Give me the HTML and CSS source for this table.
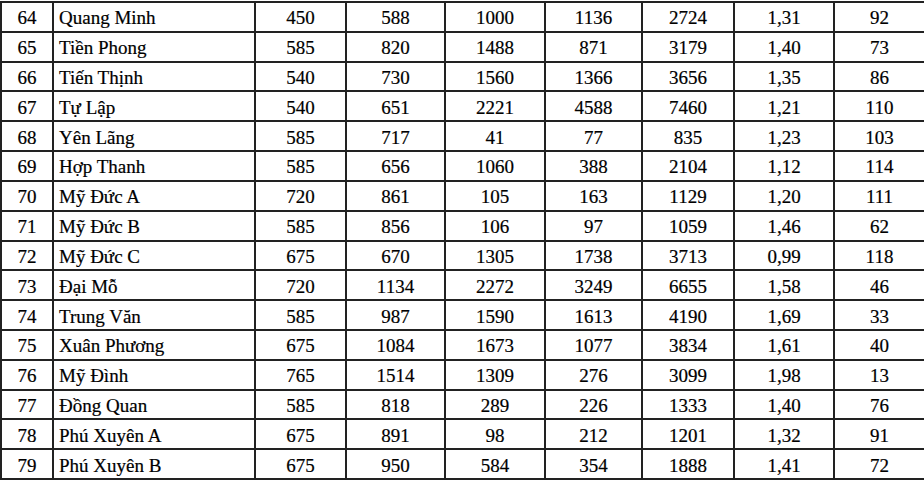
FILE: index.html
```html
<!DOCTYPE html>
<html lang="vi">
<head>
<meta charset="utf-8">
<link rel="stylesheet" href="styles.css">
</head>
<body>
<table class="grid">
<colgroup>
<col class="c-no"><col class="c-name"><col class="c-a"><col class="c-b"><col class="c-c"><col class="c-d"><col class="c-e"><col class="c-f"><col class="c-g">
</colgroup>
<tbody>
<tr><td>64</td><td class="name">Quang Minh</td><td>450</td><td>588</td><td>1000</td><td>1136</td><td>2724</td><td>1,31</td><td>92</td></tr>
<tr><td>65</td><td class="name">Tiền Phong</td><td>585</td><td>820</td><td>1488</td><td>871</td><td>3179</td><td>1,40</td><td>73</td></tr>
<tr><td>66</td><td class="name">Tiến Thịnh</td><td>540</td><td>730</td><td>1560</td><td>1366</td><td>3656</td><td>1,35</td><td>86</td></tr>
<tr><td>67</td><td class="name">Tự Lập</td><td>540</td><td>651</td><td>2221</td><td>4588</td><td>7460</td><td>1,21</td><td>110</td></tr>
<tr><td>68</td><td class="name">Yên Lãng</td><td>585</td><td>717</td><td>41</td><td>77</td><td>835</td><td>1,23</td><td>103</td></tr>
<tr><td>69</td><td class="name">Hợp Thanh</td><td>585</td><td>656</td><td>1060</td><td>388</td><td>2104</td><td>1,12</td><td>114</td></tr>
<tr><td>70</td><td class="name">Mỹ Đức A</td><td>720</td><td>861</td><td>105</td><td>163</td><td>1129</td><td>1,20</td><td>111</td></tr>
<tr><td>71</td><td class="name">Mỹ Đức B</td><td>585</td><td>856</td><td>106</td><td>97</td><td>1059</td><td>1,46</td><td>62</td></tr>
<tr><td>72</td><td class="name">Mỹ Đức C</td><td>675</td><td>670</td><td>1305</td><td>1738</td><td>3713</td><td>0,99</td><td>118</td></tr>
<tr><td>73</td><td class="name">Đại Mỗ</td><td>720</td><td>1134</td><td>2272</td><td>3249</td><td>6655</td><td>1,58</td><td>46</td></tr>
<tr><td>74</td><td class="name">Trung Văn</td><td>585</td><td>987</td><td>1590</td><td>1613</td><td>4190</td><td>1,69</td><td>33</td></tr>
<tr><td>75</td><td class="name">Xuân Phương</td><td>675</td><td>1084</td><td>1673</td><td>1077</td><td>3834</td><td>1,61</td><td>40</td></tr>
<tr><td>76</td><td class="name">Mỹ Đình</td><td>765</td><td>1514</td><td>1309</td><td>276</td><td>3099</td><td>1,98</td><td>13</td></tr>
<tr><td>77</td><td class="name">Đồng Quan</td><td>585</td><td>818</td><td>289</td><td>226</td><td>1333</td><td>1,40</td><td>76</td></tr>
<tr><td>78</td><td class="name">Phú Xuyên A</td><td>675</td><td>891</td><td>98</td><td>212</td><td>1201</td><td>1,32</td><td>91</td></tr>
<tr><td>79</td><td class="name">Phú Xuyên B</td><td>675</td><td>950</td><td>584</td><td>354</td><td>1888</td><td>1,41</td><td>72</td></tr>
</tbody>
</table>
</body>
</html>
```
FILE: styles.css
```css
html, body {
  margin: 0;
  padding: 0;
  background: #fff;
}
body {
  padding: 1px 0 0 0;
}
.grid {
  border-collapse: collapse;
  table-layout: fixed;
  width: 924px;
  height: 479px;
  font-family: "Liberation Serif", "Times New Roman", serif;
  font-size: 19px;
  color: #000;
  -webkit-text-stroke: 0.2px #000;
}
.c-no { width: 52px; }
.c-name { width: 202px; }
.c-a { width: 91px; }
.c-b { width: 99px; }
.c-c { width: 100px; }
.c-d { width: 97px; }
.c-e { width: 92px; }
.c-f { width: 100px; }
.c-g { width: 91px; }
.grid td {
  border: 2px solid #222;
  text-align: center;
  vertical-align: middle;
  padding: 2px 0 0 0;
  line-height: 1;
  white-space: nowrap;
}
.grid td.name {
  text-align: left;
  padding-left: 5px;
}
```
